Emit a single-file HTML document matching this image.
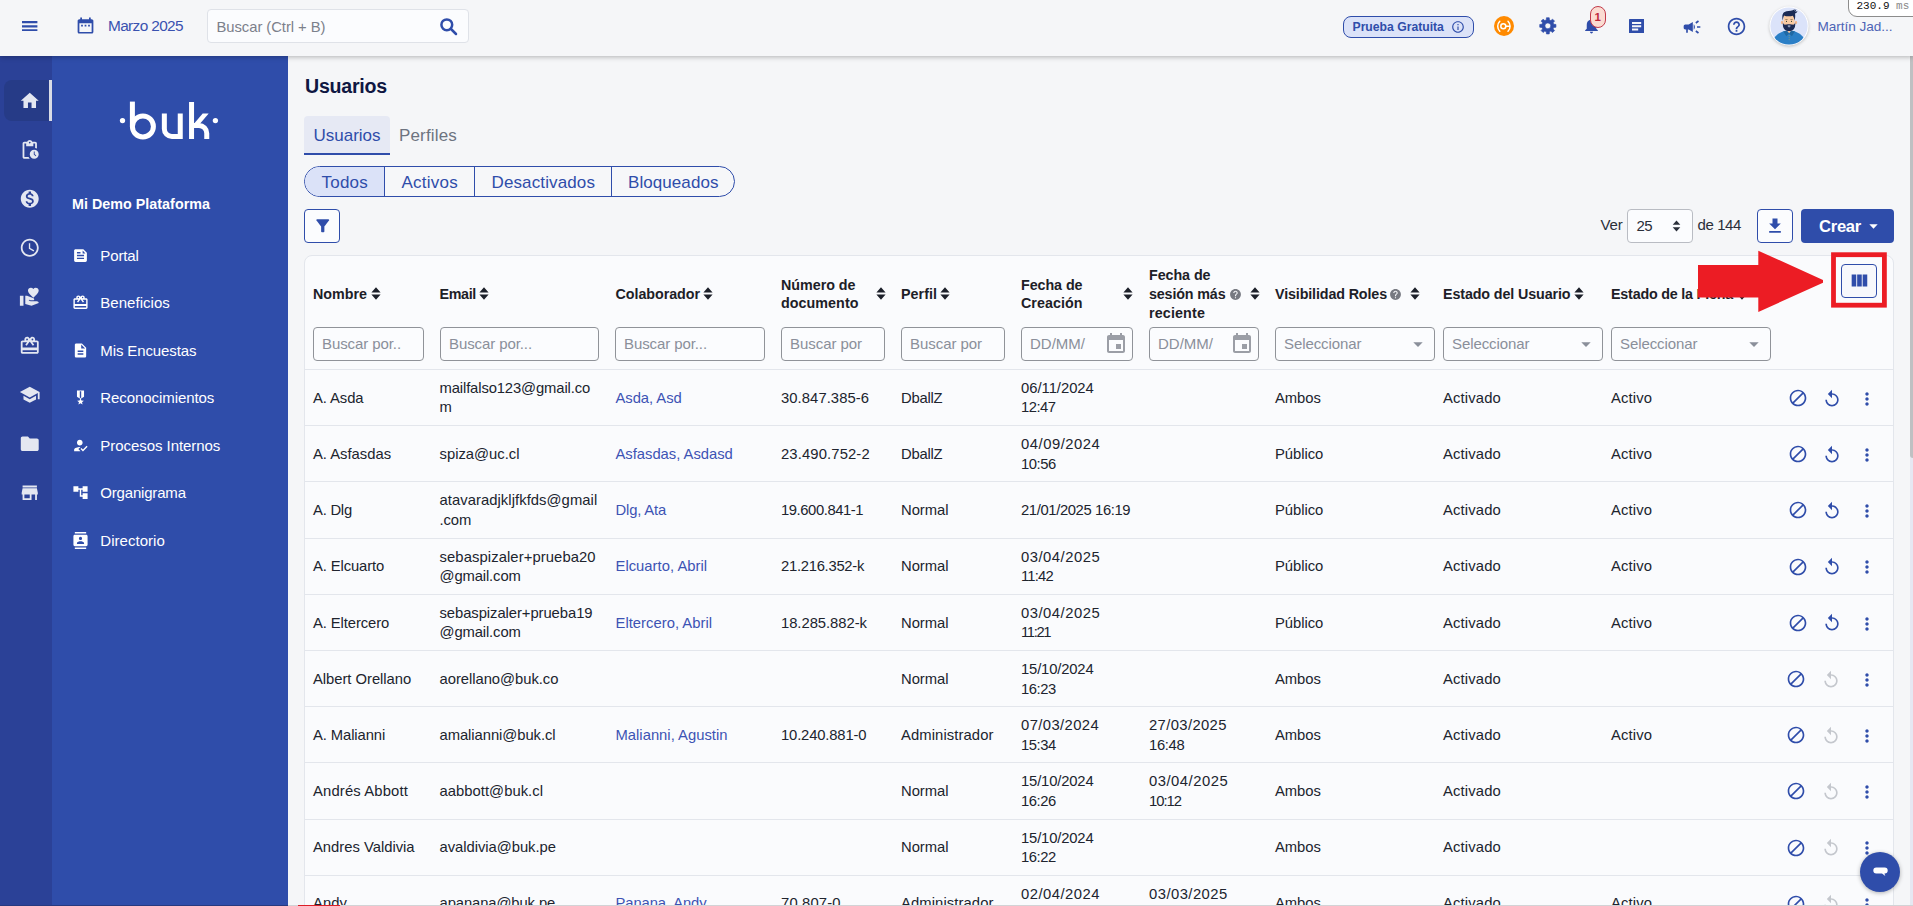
<!DOCTYPE html>
<html lang="es"><head><meta charset="utf-8"><title>Usuarios</title><style>
html,body{margin:0;padding:0}
body{width:1913px;height:906px;overflow:hidden;position:relative;background:#f5f6f8;font-family:"Liberation Sans",sans-serif}
.t{position:absolute;white-space:nowrap;line-height:20px;transform-origin:0 50%;font-family:"Liberation Sans",sans-serif}
.i{position:absolute;display:block}
.b{position:absolute}
</style></head><body>
<div class="b" style="left:0.00px;top:0.00px;width:1913.00px;height:906.00px;background:#f5f6f8"></div>
<div class="b" style="left:304.00px;top:255.00px;width:1590.00px;height:700.00px;background:#fafbfd;border:1px solid #e3e6ec;border-radius:8px;box-sizing:border-box"></div>
<span class="t" style="left:305.00px;top:76px;font-size:19.60px;font-weight:700;letter-spacing:-0.234px;color:#0f1742;">Usuarios</span>
<div class="b" style="left:304.00px;top:116.00px;width:86.00px;height:39.00px;background:#e6e9f4;border-radius:4px 4px 0 0;border-bottom:2.5px solid #2f4daa;box-sizing:border-box"></div>
<span class="t" style="left:313.50px;top:126px;font-size:17.00px;letter-spacing:-0.010px;color:#2f4daa;">Usuarios</span>
<span class="t" style="left:399.00px;top:126px;font-size:17.00px;letter-spacing:0.164px;color:#6d7380;">Perfiles</span>
<div class="b" style="left:304px;top:166px;width:431px;height:31px;border:1.3px solid #2f4daa;border-radius:16px;box-sizing:border-box;overflow:hidden;background:#f6f7f9"><div style="position:absolute;left:0;top:0;width:79.5px;height:100%;background:#dbe2f8"></div></div>
<div class="b" style="left:384.00px;top:166.00px;width:1.30px;height:31.00px;background:#2f4daa"></div>
<div class="b" style="left:474.00px;top:166.00px;width:1.30px;height:31.00px;background:#2f4daa"></div>
<div class="b" style="left:611.00px;top:166.00px;width:1.30px;height:31.00px;background:#2f4daa"></div>
<span class="t" style="left:321.50px;top:173px;font-size:17.00px;letter-spacing:0.227px;color:#2f4daa;">Todos</span>
<span class="t" style="left:401.50px;top:173px;font-size:17.00px;letter-spacing:0.244px;color:#2f4daa;">Activos</span>
<span class="t" style="left:491.50px;top:173px;font-size:17.00px;letter-spacing:0.121px;color:#2f4daa;">Desactivados</span>
<span class="t" style="left:628.00px;top:173px;font-size:17.00px;letter-spacing:0.070px;color:#2f4daa;">Bloqueados</span>
<div class="b" style="left:304.00px;top:209.00px;width:36.00px;height:34.00px;border:1.3px solid #2f4daa;border-radius:4px;box-sizing:border-box;background:#fbfcfe"></div>
<svg class="i" style="left:312.50px;top:216.20px" width="19.50" height="19.50" viewBox="0 0 24 24" fill="#2f4daa" ><path d="M4.25 5.61C6.27 8.2 10 13 10 13v6c0 .55.45 1 1 1h2c.55 0 1-.45 1-1v-6s3.72-4.8 5.74-7.39c.51-.66.04-1.61-.79-1.61H5.04c-.83 0-1.3.95-.79 1.61z"/></svg>
<span class="t" style="left:1600.50px;top:215px;font-size:15.00px;letter-spacing:-0.172px;color:#2a2f3a;">Ver</span>
<div class="b" style="left:1627.00px;top:209.00px;width:66.00px;height:34.00px;border:1px solid #b9bcc3;border-radius:4px;box-sizing:border-box;background:#fbfcfe"></div>
<span class="t" style="left:1636.50px;top:216px;font-size:15.00px;letter-spacing:-0.593px;color:#2a2f3a;">25</span>
<svg class="i" style="left:1671.5px;top:220px" width="9" height="12" viewBox="0 0 9 12" fill="#2a2f3a"><path d="M4.5 0.5 8.3 4.8H0.7zM4.5 11.5 0.7 7.2H8.3z"/></svg>
<span class="t" style="left:1697.50px;top:215px;font-size:15.00px;letter-spacing:-0.397px;color:#2a2f3a;">de 144</span>
<div class="b" style="left:1757.00px;top:209.00px;width:36.00px;height:34.00px;border:1.3px solid #2f4daa;border-radius:4px;box-sizing:border-box;background:#fbfcfe"></div>
<svg class="i" style="left:1765.00px;top:216.00px" width="20.00" height="20.00" viewBox="0 0 24 24" fill="#2f4daa" ><path d="M19 9h-4V3H9v6H5l7 7 7-7zM5 18v2h14v-2H5z"/></svg>
<div class="b" style="left:1801.00px;top:209.00px;width:93.00px;height:34.00px;border-radius:4px;background:#2f4daa"></div>
<span class="t" style="left:1819.00px;top:217px;font-size:16.60px;font-weight:700;letter-spacing:-0.275px;color:#fff;">Crear</span>
<svg class="i" style="left:1869px;top:223.5px" width="9" height="5" viewBox="0 0 9 5" fill="#fff"><path d="M0.3 0.3H8.7L4.5 4.7z"/></svg>
<span class="t" style="left:313.00px;top:284px;font-size:14.30px;font-weight:700;letter-spacing:-0.005px;color:#1d2027;">Nombre</span>
<svg class="i" style="left:370.50px;top:287.00px" width="10" height="13" viewBox="0 0 10 13" fill="#1c202a"><path d="M5 0.3 9.6 5.4H0.4zM5 12.7 0.4 7.6H9.6z"/></svg>
<span class="t" style="left:439.50px;top:284px;font-size:14.30px;font-weight:700;letter-spacing:-0.330px;color:#1d2027;">Email</span>
<svg class="i" style="left:479.00px;top:287.00px" width="10" height="13" viewBox="0 0 10 13" fill="#1c202a"><path d="M5 0.3 9.6 5.4H0.4zM5 12.7 0.4 7.6H9.6z"/></svg>
<span class="t" style="left:615.50px;top:284px;font-size:14.30px;font-weight:700;letter-spacing:-0.047px;color:#1d2027;">Colaborador</span>
<svg class="i" style="left:703.00px;top:287.00px" width="10" height="13" viewBox="0 0 10 13" fill="#1c202a"><path d="M5 0.3 9.6 5.4H0.4zM5 12.7 0.4 7.6H9.6z"/></svg>
<span class="t" style="left:781.00px;top:275px;font-size:14.30px;font-weight:700;letter-spacing:-0.021px;color:#1d2027;">Número de</span>
<span class="t" style="left:781.00px;top:293px;font-size:14.30px;font-weight:700;letter-spacing:0.049px;color:#1d2027;">documento</span>
<svg class="i" style="left:875.50px;top:287.00px" width="10" height="13" viewBox="0 0 10 13" fill="#1c202a"><path d="M5 0.3 9.6 5.4H0.4zM5 12.7 0.4 7.6H9.6z"/></svg>
<span class="t" style="left:901.00px;top:284px;font-size:14.30px;font-weight:700;letter-spacing:0.039px;color:#1d2027;">Perfil</span>
<svg class="i" style="left:940.00px;top:287.00px" width="10" height="13" viewBox="0 0 10 13" fill="#1c202a"><path d="M5 0.3 9.6 5.4H0.4zM5 12.7 0.4 7.6H9.6z"/></svg>
<span class="t" style="left:1021.00px;top:275px;font-size:14.30px;font-weight:700;letter-spacing:-0.061px;color:#1d2027;">Fecha de</span>
<span class="t" style="left:1021.00px;top:293px;font-size:14.30px;font-weight:700;letter-spacing:0.038px;color:#1d2027;">Creación</span>
<svg class="i" style="left:1123.00px;top:287.00px" width="10" height="13" viewBox="0 0 10 13" fill="#1c202a"><path d="M5 0.3 9.6 5.4H0.4zM5 12.7 0.4 7.6H9.6z"/></svg>
<span class="t" style="left:1149.00px;top:265px;font-size:14.30px;font-weight:700;letter-spacing:-0.061px;color:#1d2027;">Fecha de</span>
<span class="t" style="left:1149.00px;top:284px;font-size:14.30px;font-weight:700;letter-spacing:-0.140px;color:#1d2027;">sesión más</span>
<span class="t" style="left:1149.00px;top:303px;font-size:14.30px;font-weight:700;letter-spacing:0.144px;color:#1d2027;">reciente</span>
<svg class="i" style="left:1229.00px;top:287.80px" width="13.00" height="13.00" viewBox="0 0 24 24" fill="#777a82" ><path d="M12 2C6.48 2 2 6.48 2 12s4.48 10 10 10 10-4.48 10-10S17.52 2 12 2zm1 17h-2v-2h2v2zm2.07-7.75l-.9.92C13.45 12.9 13 13.5 13 15h-2v-.5c0-1.1.45-2.1 1.17-2.83l1.24-1.26c.37-.36.59-.86.59-1.41 0-1.1-.9-2-2-2s-2 .9-2 2H8c0-2.21 1.79-4 4-4s4 1.79 4 4c0 .88-.36 1.68-.93 2.25z"/></svg>
<svg class="i" style="left:1249.50px;top:287.00px" width="10" height="13" viewBox="0 0 10 13" fill="#1c202a"><path d="M5 0.3 9.6 5.4H0.4zM5 12.7 0.4 7.6H9.6z"/></svg>
<span class="t" style="left:1275.00px;top:284px;font-size:14.30px;font-weight:700;letter-spacing:-0.128px;color:#1d2027;">Visibilidad Roles</span>
<svg class="i" style="left:1389.00px;top:287.80px" width="13.00" height="13.00" viewBox="0 0 24 24" fill="#777a82" ><path d="M12 2C6.48 2 2 6.48 2 12s4.48 10 10 10 10-4.48 10-10S17.52 2 12 2zm1 17h-2v-2h2v2zm2.07-7.75l-.9.92C13.45 12.9 13 13.5 13 15h-2v-.5c0-1.1.45-2.1 1.17-2.83l1.24-1.26c.37-.36.59-.86.59-1.41 0-1.1-.9-2-2-2s-2 .9-2 2H8c0-2.21 1.79-4 4-4s4 1.79 4 4c0 .88-.36 1.68-.93 2.25z"/></svg>
<svg class="i" style="left:1409.50px;top:287.00px" width="10" height="13" viewBox="0 0 10 13" fill="#1c202a"><path d="M5 0.3 9.6 5.4H0.4zM5 12.7 0.4 7.6H9.6z"/></svg>
<span class="t" style="left:1443.00px;top:284px;font-size:14.30px;font-weight:700;letter-spacing:-0.113px;color:#1d2027;">Estado del Usuario</span>
<svg class="i" style="left:1573.50px;top:287.00px" width="10" height="13" viewBox="0 0 10 13" fill="#1c202a"><path d="M5 0.3 9.6 5.4H0.4zM5 12.7 0.4 7.6H9.6z"/></svg>
<span class="t" style="left:1611.00px;top:284px;font-size:14.30px;font-weight:700;letter-spacing:-0.198px;color:#1d2027;">Estado de la Ficha</span>
<svg class="i" style="left:1736.50px;top:287.00px" width="10" height="13" viewBox="0 0 10 13" fill="#1c202a"><path d="M5 0.3 9.6 5.4H0.4zM5 12.7 0.4 7.6H9.6z"/></svg>
<div class="b" style="left:313.00px;top:327.00px;width:111.00px;height:34.00px;border:1px solid #909399;border-radius:4px;box-sizing:border-box;background:#fbfcfe"></div>
<span class="t" style="left:322.00px;top:334px;font-size:15.00px;letter-spacing:-0.087px;color:#8a8f9a;">Buscar por..</span>
<div class="b" style="left:440.00px;top:327.00px;width:159.00px;height:34.00px;border:1px solid #909399;border-radius:4px;box-sizing:border-box;background:#fbfcfe"></div>
<span class="t" style="left:449.00px;top:334px;font-size:15.00px;letter-spacing:-0.093px;color:#8a8f9a;">Buscar por...</span>
<div class="b" style="left:615.00px;top:327.00px;width:150.00px;height:34.00px;border:1px solid #909399;border-radius:4px;box-sizing:border-box;background:#fbfcfe"></div>
<span class="t" style="left:624.00px;top:334px;font-size:15.00px;letter-spacing:-0.093px;color:#8a8f9a;">Buscar por...</span>
<div class="b" style="left:781.00px;top:327.00px;width:104.00px;height:34.00px;border:1px solid #909399;border-radius:4px;box-sizing:border-box;background:#fbfcfe"></div>
<span class="t" style="left:790.00px;top:334px;font-size:15.00px;letter-spacing:-0.053px;color:#8a8f9a;">Buscar por</span>
<div class="b" style="left:901.00px;top:327.00px;width:104.00px;height:34.00px;border:1px solid #909399;border-radius:4px;box-sizing:border-box;background:#fbfcfe"></div>
<span class="t" style="left:910.00px;top:334px;font-size:15.00px;letter-spacing:-0.053px;color:#8a8f9a;">Buscar por</span>
<div class="b" style="left:1021.00px;top:327.00px;width:112.00px;height:34.00px;border:1px solid #909399;border-radius:4px;box-sizing:border-box;background:#fbfcfe"></div>
<span class="t" style="left:1030.00px;top:334px;font-size:15.00px;letter-spacing:0.001px;color:#8a8f9a;">DD/MM/</span>
<svg class="i" style="left:1104.00px;top:332.20px" width="24.00" height="24.00" viewBox="0 0 24 24" fill="#9b9ea6" ><path d="M17 12h-5v5h5v-5zM16 1v2H8V1H6v2H5c-1.11 0-1.99.9-1.99 2L3 19c0 1.1.89 2 2 2h14c1.1 0 2-.9 2-2V5c0-1.100-.9-2-2-2h-1V1h-2zm3 18H5V8h14v11z"/></svg>
<div class="b" style="left:1149.00px;top:327.00px;width:110.00px;height:34.00px;border:1px solid #909399;border-radius:4px;box-sizing:border-box;background:#fbfcfe"></div>
<span class="t" style="left:1158.00px;top:334px;font-size:15.00px;letter-spacing:0.001px;color:#8a8f9a;">DD/MM/</span>
<svg class="i" style="left:1230.00px;top:332.20px" width="24.00" height="24.00" viewBox="0 0 24 24" fill="#9b9ea6" ><path d="M17 12h-5v5h5v-5zM16 1v2H8V1H6v2H5c-1.11 0-1.99.9-1.99 2L3 19c0 1.1.89 2 2 2h14c1.1 0 2-.9 2-2V5c0-1.100-.9-2-2-2h-1V1h-2zm3 18H5V8h14v11z"/></svg>
<div class="b" style="left:1275.00px;top:327.00px;width:160.00px;height:34.00px;border:1px solid #909399;border-radius:4px;box-sizing:border-box;background:#fbfcfe"></div>
<span class="t" style="left:1284.00px;top:334px;font-size:15.00px;letter-spacing:-0.080px;color:#8a8f9a;">Seleccionar</span>
<svg class="i" style="left:1412.50px;top:341.5px" width="10" height="5" viewBox="0 0 10 5" fill="#8a8f9a"><path d="M0.3 0.2H9.7L5 4.9z"/></svg>
<div class="b" style="left:1443.00px;top:327.00px;width:160.00px;height:34.00px;border:1px solid #909399;border-radius:4px;box-sizing:border-box;background:#fbfcfe"></div>
<span class="t" style="left:1452.00px;top:334px;font-size:15.00px;letter-spacing:-0.080px;color:#8a8f9a;">Seleccionar</span>
<svg class="i" style="left:1580.50px;top:341.5px" width="10" height="5" viewBox="0 0 10 5" fill="#8a8f9a"><path d="M0.3 0.2H9.7L5 4.9z"/></svg>
<div class="b" style="left:1611.00px;top:327.00px;width:160.00px;height:34.00px;border:1px solid #909399;border-radius:4px;box-sizing:border-box;background:#fbfcfe"></div>
<span class="t" style="left:1620.00px;top:334px;font-size:15.00px;letter-spacing:-0.080px;color:#8a8f9a;">Seleccionar</span>
<svg class="i" style="left:1748.50px;top:341.5px" width="10" height="5" viewBox="0 0 10 5" fill="#8a8f9a"><path d="M0.3 0.2H9.7L5 4.9z"/></svg>
<div class="b" style="left:305.00px;top:369.00px;width:1588.00px;height:1.00px;background:#e3e6ec"></div>
<span class="t" style="left:313.00px;top:388px;font-size:14.80px;letter-spacing:-0.073px;color:#20242e;">A. Asda</span>
<span class="t" style="left:439.50px;top:378px;font-size:14.80px;letter-spacing:-0.125px;color:#20242e;">mailfalso123@gmail.co</span>
<span class="t" style="left:439.50px;top:397px;font-size:14.80px;letter-spacing:-0.429px;color:#20242e;">m</span>
<span class="t" style="left:615.50px;top:388px;font-size:14.80px;letter-spacing:-0.049px;color:#3d53b4;">Asda, Asd</span>
<span class="t" style="left:781.00px;top:388px;font-size:14.80px;letter-spacing:0.072px;color:#20242e;">30.847.385-6</span>
<span class="t" style="left:901.00px;top:388px;font-size:14.80px;letter-spacing:-0.228px;color:#20242e;">DballZ</span>
<span class="t" style="left:1021.00px;top:378px;font-size:14.80px;letter-spacing:-0.018px;color:#20242e;">06/11/2024</span>
<span class="t" style="left:1021.00px;top:397px;font-size:14.80px;letter-spacing:-0.507px;color:#20242e;">12:47</span>
<span class="t" style="left:1275.00px;top:388px;font-size:14.80px;letter-spacing:-0.053px;color:#20242e;">Ambos</span>
<span class="t" style="left:1443.00px;top:388px;font-size:14.80px;letter-spacing:0.154px;color:#20242e;">Activado</span>
<span class="t" style="left:1611.00px;top:388px;font-size:14.80px;letter-spacing:0.116px;color:#20242e;">Activo</span>
<svg class="i" style="left:1788.30px;top:387.90px" width="20.00" height="20.00" viewBox="0 0 24 24" fill="#2f4daa" ><path d="M12 2C6.48 2 2 6.48 2 12s4.48 10 10 10 10-4.48 10-10S17.52 2 12 2zM4 12c0-4.42 3.58-8 8-8 1.85 0 3.55.63 4.9 1.69L5.69 16.9C4.63 15.55 4 13.85 4 12zm8 8c-1.85 0-3.55-.63-4.9-1.69L18.31 7.1C19.37 8.45 20 10.150 20 12c0 4.420-3.580 8-8 8z"/></svg>
<svg class="i" style="left:1822.00px;top:388.60px" width="20.00" height="20.00" viewBox="0 0 24 24" fill="#2f4daa" ><path d="M12 5V1L7 6l5 5V7c3.31 0 6 2.69 6 6s-2.69 6-6 6-6-2.69-6-6H4c0 4.42 3.58 8 8 8s8-3.58 8-8-3.58-8-8-8z"/></svg>
<svg class="i" style="left:1856.80px;top:388.70px" width="20.00" height="20.00" viewBox="0 0 24 24" fill="#2f4daa" ><path d="M12 8c1.1 0 2-.9 2-2s-.9-2-2-2-2 .9-2 2 .9 2 2 2zm0 2c-1.1 0-2 .9-2 2s.9 2 2 2 2-.9 2-2-.9-2-2-2zm0 6c-1.1 0-2 .9-2 2s.9 2 2 2 2-.9 2-2-.9-2-2-2z"/></svg>
<div class="b" style="left:305.00px;top:425.20px;width:1588.00px;height:1.00px;background:#e3e6ec"></div>
<span class="t" style="left:313.00px;top:444px;font-size:14.80px;letter-spacing:-0.005px;color:#20242e;">A. Asfasdas</span>
<span class="t" style="left:439.50px;top:444px;font-size:14.80px;letter-spacing:-0.001px;color:#20242e;">spiza@uc.cl</span>
<span class="t" style="left:615.50px;top:444px;font-size:14.80px;letter-spacing:-0.022px;color:#3d53b4;">Asfasdas, Asdasd</span>
<span class="t" style="left:781.00px;top:444px;font-size:14.80px;letter-spacing:0.130px;color:#20242e;">23.490.752-2</span>
<span class="t" style="left:901.00px;top:444px;font-size:14.80px;letter-spacing:-0.228px;color:#20242e;">DballZ</span>
<span class="t" style="left:1021.00px;top:434px;font-size:14.80px;letter-spacing:0.533px;color:#20242e;">04/09/2024</span>
<span class="t" style="left:1021.00px;top:454px;font-size:14.80px;letter-spacing:-0.447px;color:#20242e;">10:56</span>
<span class="t" style="left:1275.00px;top:444px;font-size:14.80px;letter-spacing:-0.035px;color:#20242e;">Público</span>
<span class="t" style="left:1443.00px;top:444px;font-size:14.80px;letter-spacing:0.154px;color:#20242e;">Activado</span>
<span class="t" style="left:1611.00px;top:444px;font-size:14.80px;letter-spacing:0.116px;color:#20242e;">Activo</span>
<svg class="i" style="left:1788.30px;top:444.10px" width="20.00" height="20.00" viewBox="0 0 24 24" fill="#2f4daa" ><path d="M12 2C6.48 2 2 6.48 2 12s4.48 10 10 10 10-4.48 10-10S17.52 2 12 2zM4 12c0-4.42 3.58-8 8-8 1.85 0 3.55.63 4.9 1.69L5.69 16.9C4.63 15.55 4 13.85 4 12zm8 8c-1.85 0-3.55-.63-4.9-1.69L18.31 7.1C19.37 8.45 20 10.150 20 12c0 4.420-3.580 8-8 8z"/></svg>
<svg class="i" style="left:1822.00px;top:444.80px" width="20.00" height="20.00" viewBox="0 0 24 24" fill="#2f4daa" ><path d="M12 5V1L7 6l5 5V7c3.31 0 6 2.69 6 6s-2.69 6-6 6-6-2.69-6-6H4c0 4.42 3.58 8 8 8s8-3.58 8-8-3.58-8-8-8z"/></svg>
<svg class="i" style="left:1856.80px;top:444.90px" width="20.00" height="20.00" viewBox="0 0 24 24" fill="#2f4daa" ><path d="M12 8c1.1 0 2-.9 2-2s-.9-2-2-2-2 .9-2 2 .9 2 2 2zm0 2c-1.1 0-2 .9-2 2s.9 2 2 2 2-.9 2-2-.9-2-2-2zm0 6c-1.1 0-2 .9-2 2s.9 2 2 2 2-.9 2-2-.9-2-2-2z"/></svg>
<div class="b" style="left:305.00px;top:481.40px;width:1588.00px;height:1.00px;background:#e3e6ec"></div>
<span class="t" style="left:313.00px;top:500px;font-size:14.80px;letter-spacing:-0.234px;color:#20242e;">A. Dlg</span>
<span class="t" style="left:439.50px;top:490px;font-size:14.80px;letter-spacing:0.056px;color:#20242e;">atavaradjkljfkfds@gmail</span>
<span class="t" style="left:439.50px;top:510px;font-size:14.80px;letter-spacing:-0.093px;color:#20242e;">.com</span>
<span class="t" style="left:615.50px;top:500px;font-size:14.80px;letter-spacing:-0.166px;color:#3d53b4;">Dlg, Ata</span>
<span class="t" style="left:781.00px;top:500px;font-size:14.80px;letter-spacing:-0.420px;color:#20242e;">19.600.841-1</span>
<span class="t" style="left:901.00px;top:500px;font-size:14.80px;letter-spacing:-0.050px;color:#20242e;">Normal</span>
<span class="t" style="left:1021.00px;top:500px;font-size:14.80px;letter-spacing:-0.376px;color:#20242e;">21/01/2025 16:19</span>
<span class="t" style="left:1275.00px;top:500px;font-size:14.80px;letter-spacing:-0.035px;color:#20242e;">Público</span>
<span class="t" style="left:1443.00px;top:500px;font-size:14.80px;letter-spacing:0.154px;color:#20242e;">Activado</span>
<span class="t" style="left:1611.00px;top:500px;font-size:14.80px;letter-spacing:0.116px;color:#20242e;">Activo</span>
<svg class="i" style="left:1788.30px;top:500.30px" width="20.00" height="20.00" viewBox="0 0 24 24" fill="#2f4daa" ><path d="M12 2C6.48 2 2 6.48 2 12s4.48 10 10 10 10-4.48 10-10S17.52 2 12 2zM4 12c0-4.42 3.58-8 8-8 1.85 0 3.55.63 4.9 1.69L5.69 16.9C4.63 15.55 4 13.85 4 12zm8 8c-1.85 0-3.55-.63-4.9-1.69L18.31 7.1C19.37 8.45 20 10.150 20 12c0 4.420-3.580 8-8 8z"/></svg>
<svg class="i" style="left:1822.00px;top:501.00px" width="20.00" height="20.00" viewBox="0 0 24 24" fill="#2f4daa" ><path d="M12 5V1L7 6l5 5V7c3.31 0 6 2.69 6 6s-2.69 6-6 6-6-2.69-6-6H4c0 4.42 3.58 8 8 8s8-3.58 8-8-3.58-8-8-8z"/></svg>
<svg class="i" style="left:1856.80px;top:501.10px" width="20.00" height="20.00" viewBox="0 0 24 24" fill="#2f4daa" ><path d="M12 8c1.1 0 2-.9 2-2s-.9-2-2-2-2 .9-2 2 .9 2 2 2zm0 2c-1.1 0-2 .9-2 2s.9 2 2 2 2-.9 2-2-.9-2-2-2zm0 6c-1.1 0-2 .9-2 2s.9 2 2 2 2-.9 2-2-.9-2-2-2z"/></svg>
<div class="b" style="left:305.00px;top:537.60px;width:1588.00px;height:1.00px;background:#e3e6ec"></div>
<span class="t" style="left:313.00px;top:556px;font-size:14.80px;letter-spacing:-0.108px;color:#20242e;">A. Elcuarto</span>
<span class="t" style="left:439.50px;top:547px;font-size:14.80px;letter-spacing:0.091px;color:#20242e;">sebaspizaler+prueba20</span>
<span class="t" style="left:439.50px;top:566px;font-size:14.80px;letter-spacing:-0.126px;color:#20242e;">@gmail.com</span>
<span class="t" style="left:615.50px;top:556px;font-size:14.80px;letter-spacing:0.019px;color:#3d53b4;">Elcuarto, Abril</span>
<span class="t" style="left:781.00px;top:556px;font-size:14.80px;letter-spacing:-0.275px;color:#20242e;">21.216.352-k</span>
<span class="t" style="left:901.00px;top:556px;font-size:14.80px;letter-spacing:-0.050px;color:#20242e;">Normal</span>
<span class="t" style="left:1021.00px;top:547px;font-size:14.80px;letter-spacing:0.513px;color:#20242e;">03/04/2025</span>
<span class="t" style="left:1021.00px;top:566px;font-size:14.80px;letter-spacing:-0.788px;color:#20242e;">11:42</span>
<span class="t" style="left:1275.00px;top:556px;font-size:14.80px;letter-spacing:-0.035px;color:#20242e;">Público</span>
<span class="t" style="left:1443.00px;top:556px;font-size:14.80px;letter-spacing:0.154px;color:#20242e;">Activado</span>
<span class="t" style="left:1611.00px;top:556px;font-size:14.80px;letter-spacing:0.116px;color:#20242e;">Activo</span>
<svg class="i" style="left:1788.30px;top:556.50px" width="20.00" height="20.00" viewBox="0 0 24 24" fill="#2f4daa" ><path d="M12 2C6.48 2 2 6.48 2 12s4.48 10 10 10 10-4.48 10-10S17.52 2 12 2zM4 12c0-4.42 3.58-8 8-8 1.85 0 3.55.63 4.9 1.69L5.69 16.9C4.63 15.55 4 13.85 4 12zm8 8c-1.85 0-3.55-.63-4.9-1.69L18.31 7.1C19.37 8.45 20 10.150 20 12c0 4.420-3.580 8-8 8z"/></svg>
<svg class="i" style="left:1822.00px;top:557.20px" width="20.00" height="20.00" viewBox="0 0 24 24" fill="#2f4daa" ><path d="M12 5V1L7 6l5 5V7c3.31 0 6 2.69 6 6s-2.69 6-6 6-6-2.69-6-6H4c0 4.42 3.58 8 8 8s8-3.58 8-8-3.58-8-8-8z"/></svg>
<svg class="i" style="left:1856.80px;top:557.30px" width="20.00" height="20.00" viewBox="0 0 24 24" fill="#2f4daa" ><path d="M12 8c1.1 0 2-.9 2-2s-.9-2-2-2-2 .9-2 2 .9 2 2 2zm0 2c-1.1 0-2 .9-2 2s.9 2 2 2 2-.9 2-2-.9-2-2-2zm0 6c-1.1 0-2 .9-2 2s.9 2 2 2 2-.9 2-2-.9-2-2-2z"/></svg>
<div class="b" style="left:305.00px;top:593.80px;width:1588.00px;height:1.00px;background:#e3e6ec"></div>
<span class="t" style="left:313.00px;top:613px;font-size:14.80px;letter-spacing:-0.093px;color:#20242e;">A. Eltercero</span>
<span class="t" style="left:439.50px;top:603px;font-size:14.80px;letter-spacing:-0.061px;color:#20242e;">sebaspizaler+prueba19</span>
<span class="t" style="left:439.50px;top:622px;font-size:14.80px;letter-spacing:-0.126px;color:#20242e;">@gmail.com</span>
<span class="t" style="left:615.50px;top:613px;font-size:14.80px;letter-spacing:0.022px;color:#3d53b4;">Eltercero, Abril</span>
<span class="t" style="left:781.00px;top:613px;font-size:14.80px;letter-spacing:-0.042px;color:#20242e;">18.285.882-k</span>
<span class="t" style="left:901.00px;top:613px;font-size:14.80px;letter-spacing:-0.050px;color:#20242e;">Normal</span>
<span class="t" style="left:1021.00px;top:603px;font-size:14.80px;letter-spacing:0.513px;color:#20242e;">03/04/2025</span>
<span class="t" style="left:1021.00px;top:622px;font-size:14.80px;letter-spacing:-1.348px;color:#20242e;">11:21</span>
<span class="t" style="left:1275.00px;top:613px;font-size:14.80px;letter-spacing:-0.035px;color:#20242e;">Público</span>
<span class="t" style="left:1443.00px;top:613px;font-size:14.80px;letter-spacing:0.154px;color:#20242e;">Activado</span>
<span class="t" style="left:1611.00px;top:613px;font-size:14.80px;letter-spacing:0.116px;color:#20242e;">Activo</span>
<svg class="i" style="left:1788.30px;top:612.70px" width="20.00" height="20.00" viewBox="0 0 24 24" fill="#2f4daa" ><path d="M12 2C6.48 2 2 6.48 2 12s4.48 10 10 10 10-4.48 10-10S17.52 2 12 2zM4 12c0-4.42 3.58-8 8-8 1.85 0 3.55.63 4.9 1.69L5.69 16.9C4.63 15.55 4 13.85 4 12zm8 8c-1.85 0-3.55-.63-4.9-1.69L18.31 7.1C19.37 8.45 20 10.150 20 12c0 4.420-3.580 8-8 8z"/></svg>
<svg class="i" style="left:1822.00px;top:613.40px" width="20.00" height="20.00" viewBox="0 0 24 24" fill="#2f4daa" ><path d="M12 5V1L7 6l5 5V7c3.31 0 6 2.69 6 6s-2.69 6-6 6-6-2.69-6-6H4c0 4.42 3.58 8 8 8s8-3.58 8-8-3.58-8-8-8z"/></svg>
<svg class="i" style="left:1856.80px;top:613.50px" width="20.00" height="20.00" viewBox="0 0 24 24" fill="#2f4daa" ><path d="M12 8c1.1 0 2-.9 2-2s-.9-2-2-2-2 .9-2 2 .9 2 2 2zm0 2c-1.1 0-2 .9-2 2s.9 2 2 2 2-.9 2-2-.9-2-2-2zm0 6c-1.1 0-2 .9-2 2s.9 2 2 2 2-.9 2-2-.9-2-2-2z"/></svg>
<div class="b" style="left:305.00px;top:650.00px;width:1588.00px;height:1.00px;background:#e3e6ec"></div>
<span class="t" style="left:313.00px;top:669px;font-size:14.80px;letter-spacing:-0.035px;color:#20242e;">Albert Orellano</span>
<span class="t" style="left:439.50px;top:669px;font-size:14.80px;letter-spacing:-0.039px;color:#20242e;">aorellano@buk.co</span>
<span class="t" style="left:901.00px;top:669px;font-size:14.80px;letter-spacing:-0.050px;color:#20242e;">Normal</span>
<span class="t" style="left:1021.00px;top:659px;font-size:14.80px;letter-spacing:-0.157px;color:#20242e;">15/10/2024</span>
<span class="t" style="left:1021.00px;top:679px;font-size:14.80px;letter-spacing:-0.447px;color:#20242e;">16:23</span>
<span class="t" style="left:1275.00px;top:669px;font-size:14.80px;letter-spacing:-0.053px;color:#20242e;">Ambos</span>
<span class="t" style="left:1443.00px;top:669px;font-size:14.80px;letter-spacing:0.154px;color:#20242e;">Activado</span>
<svg class="i" style="left:1786.30px;top:668.90px" width="20.00" height="20.00" viewBox="0 0 24 24" fill="#2f4daa" ><path d="M12 2C6.48 2 2 6.48 2 12s4.48 10 10 10 10-4.48 10-10S17.52 2 12 2zM4 12c0-4.42 3.58-8 8-8 1.85 0 3.55.63 4.9 1.69L5.69 16.9C4.63 15.55 4 13.85 4 12zm8 8c-1.85 0-3.55-.63-4.9-1.69L18.31 7.1C19.37 8.45 20 10.150 20 12c0 4.420-3.580 8-8 8z"/></svg>
<svg class="i" style="left:1821.00px;top:669.60px" width="20.00" height="20.00" viewBox="0 0 24 24" fill="#c4c7cd" ><path d="M12 5V1L7 6l5 5V7c3.31 0 6 2.69 6 6s-2.69 6-6 6-6-2.69-6-6H4c0 4.42 3.58 8 8 8s8-3.58 8-8-3.58-8-8-8z"/></svg>
<svg class="i" style="left:1856.80px;top:669.70px" width="20.00" height="20.00" viewBox="0 0 24 24" fill="#2f4daa" ><path d="M12 8c1.1 0 2-.9 2-2s-.9-2-2-2-2 .9-2 2 .9 2 2 2zm0 2c-1.1 0-2 .9-2 2s.9 2 2 2 2-.9 2-2-.9-2-2-2zm0 6c-1.1 0-2 .9-2 2s.9 2 2 2 2-.9 2-2-.9-2-2-2z"/></svg>
<div class="b" style="left:305.00px;top:706.20px;width:1588.00px;height:1.00px;background:#e3e6ec"></div>
<span class="t" style="left:313.00px;top:725px;font-size:14.80px;letter-spacing:-0.101px;color:#20242e;">A. Malianni</span>
<span class="t" style="left:439.50px;top:725px;font-size:14.80px;letter-spacing:-0.059px;color:#20242e;">amalianni@buk.cl</span>
<span class="t" style="left:615.50px;top:725px;font-size:14.80px;letter-spacing:0.006px;color:#3d53b4;">Malianni, Agustin</span>
<span class="t" style="left:781.00px;top:725px;font-size:14.80px;letter-spacing:-0.161px;color:#20242e;">10.240.881-0</span>
<span class="t" style="left:901.00px;top:725px;font-size:14.80px;letter-spacing:0.092px;color:#20242e;">Administrador</span>
<span class="t" style="left:1021.00px;top:715px;font-size:14.80px;letter-spacing:0.403px;color:#20242e;">07/03/2024</span>
<span class="t" style="left:1021.00px;top:735px;font-size:14.80px;letter-spacing:-0.447px;color:#20242e;">15:34</span>
<span class="t" style="left:1149.00px;top:715px;font-size:14.80px;letter-spacing:0.373px;color:#20242e;">27/03/2025</span>
<span class="t" style="left:1149.00px;top:735px;font-size:14.80px;letter-spacing:-0.327px;color:#20242e;">16:48</span>
<span class="t" style="left:1275.00px;top:725px;font-size:14.80px;letter-spacing:-0.053px;color:#20242e;">Ambos</span>
<span class="t" style="left:1443.00px;top:725px;font-size:14.80px;letter-spacing:0.154px;color:#20242e;">Activado</span>
<span class="t" style="left:1611.00px;top:725px;font-size:14.80px;letter-spacing:0.116px;color:#20242e;">Activo</span>
<svg class="i" style="left:1786.30px;top:725.10px" width="20.00" height="20.00" viewBox="0 0 24 24" fill="#2f4daa" ><path d="M12 2C6.48 2 2 6.48 2 12s4.48 10 10 10 10-4.48 10-10S17.52 2 12 2zM4 12c0-4.42 3.58-8 8-8 1.85 0 3.55.63 4.9 1.69L5.69 16.9C4.63 15.55 4 13.85 4 12zm8 8c-1.85 0-3.55-.63-4.9-1.69L18.31 7.1C19.37 8.45 20 10.150 20 12c0 4.420-3.580 8-8 8z"/></svg>
<svg class="i" style="left:1821.00px;top:725.80px" width="20.00" height="20.00" viewBox="0 0 24 24" fill="#c4c7cd" ><path d="M12 5V1L7 6l5 5V7c3.31 0 6 2.69 6 6s-2.69 6-6 6-6-2.69-6-6H4c0 4.42 3.58 8 8 8s8-3.58 8-8-3.58-8-8-8z"/></svg>
<svg class="i" style="left:1856.80px;top:725.90px" width="20.00" height="20.00" viewBox="0 0 24 24" fill="#2f4daa" ><path d="M12 8c1.1 0 2-.9 2-2s-.9-2-2-2-2 .9-2 2 .9 2 2 2zm0 2c-1.1 0-2 .9-2 2s.9 2 2 2 2-.9 2-2-.9-2-2-2zm0 6c-1.1 0-2 .9-2 2s.9 2 2 2 2-.9 2-2-.9-2-2-2z"/></svg>
<div class="b" style="left:305.00px;top:762.40px;width:1588.00px;height:1.00px;background:#e3e6ec"></div>
<span class="t" style="left:313.00px;top:781px;font-size:14.80px;letter-spacing:0.155px;color:#20242e;">Andrés Abbott</span>
<span class="t" style="left:439.50px;top:781px;font-size:14.80px;letter-spacing:0.031px;color:#20242e;">aabbott@buk.cl</span>
<span class="t" style="left:901.00px;top:781px;font-size:14.80px;letter-spacing:-0.050px;color:#20242e;">Normal</span>
<span class="t" style="left:1021.00px;top:771px;font-size:14.80px;letter-spacing:-0.157px;color:#20242e;">15/10/2024</span>
<span class="t" style="left:1021.00px;top:791px;font-size:14.80px;letter-spacing:-0.447px;color:#20242e;">16:26</span>
<span class="t" style="left:1149.00px;top:771px;font-size:14.80px;letter-spacing:0.513px;color:#20242e;">03/04/2025</span>
<span class="t" style="left:1149.00px;top:791px;font-size:14.80px;letter-spacing:-1.007px;color:#20242e;">10:12</span>
<span class="t" style="left:1275.00px;top:781px;font-size:14.80px;letter-spacing:-0.053px;color:#20242e;">Ambos</span>
<span class="t" style="left:1443.00px;top:781px;font-size:14.80px;letter-spacing:0.154px;color:#20242e;">Activado</span>
<svg class="i" style="left:1786.30px;top:781.30px" width="20.00" height="20.00" viewBox="0 0 24 24" fill="#2f4daa" ><path d="M12 2C6.48 2 2 6.48 2 12s4.48 10 10 10 10-4.48 10-10S17.52 2 12 2zM4 12c0-4.42 3.58-8 8-8 1.85 0 3.55.63 4.9 1.69L5.69 16.9C4.63 15.55 4 13.85 4 12zm8 8c-1.85 0-3.55-.63-4.9-1.69L18.31 7.1C19.37 8.45 20 10.150 20 12c0 4.420-3.580 8-8 8z"/></svg>
<svg class="i" style="left:1821.00px;top:782.00px" width="20.00" height="20.00" viewBox="0 0 24 24" fill="#c4c7cd" ><path d="M12 5V1L7 6l5 5V7c3.31 0 6 2.69 6 6s-2.69 6-6 6-6-2.69-6-6H4c0 4.42 3.58 8 8 8s8-3.58 8-8-3.58-8-8-8z"/></svg>
<svg class="i" style="left:1856.80px;top:782.10px" width="20.00" height="20.00" viewBox="0 0 24 24" fill="#2f4daa" ><path d="M12 8c1.1 0 2-.9 2-2s-.9-2-2-2-2 .9-2 2 .9 2 2 2zm0 2c-1.1 0-2 .9-2 2s.9 2 2 2 2-.9 2-2-.9-2-2-2zm0 6c-1.1 0-2 .9-2 2s.9 2 2 2 2-.9 2-2-.9-2-2-2z"/></svg>
<div class="b" style="left:305.00px;top:818.60px;width:1588.00px;height:1.00px;background:#e3e6ec"></div>
<span class="t" style="left:313.00px;top:837px;font-size:14.80px;letter-spacing:-0.009px;color:#20242e;">Andres Valdivia</span>
<span class="t" style="left:439.50px;top:837px;font-size:14.80px;letter-spacing:-0.041px;color:#20242e;">avaldivia@buk.pe</span>
<span class="t" style="left:901.00px;top:837px;font-size:14.80px;letter-spacing:-0.050px;color:#20242e;">Normal</span>
<span class="t" style="left:1021.00px;top:828px;font-size:14.80px;letter-spacing:-0.157px;color:#20242e;">15/10/2024</span>
<span class="t" style="left:1021.00px;top:847px;font-size:14.80px;letter-spacing:-0.447px;color:#20242e;">16:22</span>
<span class="t" style="left:1275.00px;top:837px;font-size:14.80px;letter-spacing:-0.053px;color:#20242e;">Ambos</span>
<span class="t" style="left:1443.00px;top:837px;font-size:14.80px;letter-spacing:0.154px;color:#20242e;">Activado</span>
<svg class="i" style="left:1786.30px;top:837.50px" width="20.00" height="20.00" viewBox="0 0 24 24" fill="#2f4daa" ><path d="M12 2C6.48 2 2 6.48 2 12s4.48 10 10 10 10-4.48 10-10S17.52 2 12 2zM4 12c0-4.42 3.58-8 8-8 1.85 0 3.55.63 4.9 1.69L5.69 16.9C4.63 15.55 4 13.85 4 12zm8 8c-1.85 0-3.55-.63-4.9-1.69L18.31 7.1C19.37 8.45 20 10.150 20 12c0 4.420-3.580 8-8 8z"/></svg>
<svg class="i" style="left:1821.00px;top:838.20px" width="20.00" height="20.00" viewBox="0 0 24 24" fill="#c4c7cd" ><path d="M12 5V1L7 6l5 5V7c3.31 0 6 2.69 6 6s-2.69 6-6 6-6-2.69-6-6H4c0 4.42 3.58 8 8 8s8-3.58 8-8-3.58-8-8-8z"/></svg>
<svg class="i" style="left:1856.80px;top:838.30px" width="20.00" height="20.00" viewBox="0 0 24 24" fill="#2f4daa" ><path d="M12 8c1.1 0 2-.9 2-2s-.9-2-2-2-2 .9-2 2 .9 2 2 2zm0 2c-1.1 0-2 .9-2 2s.9 2 2 2 2-.9 2-2-.9-2-2-2zm0 6c-1.1 0-2 .9-2 2s.9 2 2 2 2-.9 2-2-.9-2-2-2z"/></svg>
<div class="b" style="left:305.00px;top:874.80px;width:1588.00px;height:1.00px;background:#e3e6ec"></div>
<span class="t" style="left:313.00px;top:893px;font-size:14.80px;letter-spacing:0.041px;color:#20242e;">Andy</span>
<span class="t" style="left:439.50px;top:893px;font-size:14.80px;letter-spacing:-0.099px;color:#20242e;">apanana@buk.pe</span>
<span class="t" style="left:615.50px;top:893px;font-size:14.80px;letter-spacing:-0.098px;color:#3d53b4;">Panana, Andy</span>
<span class="t" style="left:781.00px;top:893px;font-size:14.80px;letter-spacing:0.146px;color:#20242e;">70.807-0</span>
<span class="t" style="left:901.00px;top:893px;font-size:14.80px;letter-spacing:0.092px;color:#20242e;">Administrador</span>
<span class="t" style="left:1021.00px;top:884px;font-size:14.80px;letter-spacing:0.493px;color:#20242e;">02/04/2024</span>
<span class="t" style="left:1149.00px;top:884px;font-size:14.80px;letter-spacing:0.463px;color:#20242e;">03/03/2025</span>
<span class="t" style="left:1275.00px;top:893px;font-size:14.80px;letter-spacing:-0.053px;color:#20242e;">Ambos</span>
<span class="t" style="left:1443.00px;top:893px;font-size:14.80px;letter-spacing:0.154px;color:#20242e;">Activado</span>
<span class="t" style="left:1611.00px;top:893px;font-size:14.80px;letter-spacing:0.116px;color:#20242e;">Activo</span>
<svg class="i" style="left:1786.30px;top:893.70px" width="20.00" height="20.00" viewBox="0 0 24 24" fill="#2f4daa" ><path d="M12 2C6.48 2 2 6.48 2 12s4.48 10 10 10 10-4.48 10-10S17.52 2 12 2zM4 12c0-4.42 3.58-8 8-8 1.85 0 3.55.63 4.9 1.69L5.69 16.9C4.63 15.55 4 13.85 4 12zm8 8c-1.85 0-3.55-.63-4.9-1.69L18.31 7.1C19.37 8.45 20 10.150 20 12c0 4.420-3.580 8-8 8z"/></svg>
<svg class="i" style="left:1821.00px;top:894.40px" width="20.00" height="20.00" viewBox="0 0 24 24" fill="#c4c7cd" ><path d="M12 5V1L7 6l5 5V7c3.31 0 6 2.69 6 6s-2.69 6-6 6-6-2.69-6-6H4c0 4.42 3.58 8 8 8s8-3.58 8-8-3.58-8-8-8z"/></svg>
<svg class="i" style="left:1856.80px;top:894.50px" width="20.00" height="20.00" viewBox="0 0 24 24" fill="#2f4daa" ><path d="M12 8c1.1 0 2-.9 2-2s-.9-2-2-2-2 .9-2 2 .9 2 2 2zm0 2c-1.1 0-2 .9-2 2s.9 2 2 2 2-.9 2-2-.9-2-2-2zm0 6c-1.1 0-2 .9-2 2s.9 2 2 2 2-.9 2-2-.9-2-2-2z"/></svg>
<svg class="i" style="left:0;top:0" width="1913" height="906" viewBox="0 0 1913 906"><polygon points="1698,265 1758.3,265 1758.3,250.7 1823,280 1823,282.700 1758.3,312 1758.3,297.600 1698,297.600" fill="#ec1c24"/><rect x="1833.5" y="254.700" width="50.900" height="50.500" fill="none" stroke="#ec1c24" stroke-width="4.800"/></svg>
<div class="b" style="left:1841.00px;top:264.00px;width:36.00px;height:34.00px;border:1.3px solid #2f4daa;border-radius:4px;box-sizing:border-box;background:#f7f8fc"></div>
<svg class="i" style="left:1848.00px;top:270.00px" width="22.00" height="22.00" viewBox="0 0 24 24" fill="#2f4daa" ><path d="M10 18h5V5h-5v13zm-6 0h5V5H4v13zM16 5v13h5V5h-5z"/></svg>
<div class="b" style="left:1910.00px;top:56.00px;width:3.00px;height:850.00px;background:#e6e8f2"></div>
<div class="b" style="left:1910.20px;top:56.00px;width:4.00px;height:402.00px;background:#bfc0c2;border-radius:0 0 0 3px"></div>
<div class="b" style="left:1860.00px;top:851.50px;width:40.00px;height:40.00px;border-radius:50%;background:#2f4daa;box-shadow:0 1px 4px rgba(0,0,0,.3)"></div>
<svg class="i" style="left:1872.5px;top:867px" width="15" height="10" viewBox="0 0 15 10"><path d="M3.300 0.500h8.400a3 3 0 0 1 0 6h-0.300l0.900 2.500-3.300-2.500H3.300a3 3 0 0 1 0-6z" fill="#fff"/></svg>
<div class="b" style="left:288.00px;top:905.00px;width:1625.00px;height:1.00px;background:#d2d3d6"></div>
<div class="b" style="left:298.00px;top:905.00px;width:42.00px;height:1.00px;background:#dc1f28"></div>
<div class="b" style="left:0.00px;top:56.00px;width:52.00px;height:850.00px;background:#2b4197"></div>
<div class="b" style="left:52.00px;top:56.00px;width:236.00px;height:850.00px;background:#2f4daa"></div>
<div class="b" style="left:4.00px;top:80.00px;width:48.00px;height:41.00px;background:#263b87;border-radius:8px 0 0 8px"></div>
<div class="b" style="left:49.00px;top:80.00px;width:3.00px;height:41.00px;background:#d9dce6"></div>
<div class="b" style="left:0.00px;top:905.00px;width:288.00px;height:1.00px;background:#27397f"></div>
<svg class="i" style="left:19.25px;top:90.00px" width="21.50" height="21.50" viewBox="0 0 24 24" fill="#e4e7f1" ><path d="M10 20v-6h4v6h5v-8h3L12 3 2 12h3v8z"/></svg>
<svg class="i" style="left:19.25px;top:139.00px" width="21.50" height="21.50" viewBox="0 0 24 24" fill="#e4e7f1" ><path d="M17 12c-2.76 0-5 2.24-5 5s2.24 5 5 5 5-2.24 5-5-2.24-5-5-5zm1.65 7.35L16.5 17.2V14h1v2.79l1.85 1.85-.7.71zM18 3h-3.18C14.4 1.84 13.3 1 12 1s-2.4.84-2.82 2H6c-1.1 0-2 .9-2 2v15c0 1.1.9 2 2 2h6.11c-.59-.57-1.07-1.25-1.42-2H6V5h2v3h8V5h2v5.08c.71.1 1.38.31 2 .6V5c0-1.1-.9-2-2-2zm-6 2c-.55 0-1-.45-1-1s.45-1 1-1 1 .45 1 1-.45 1-1 1z"/></svg>
<svg class="i" style="left:19.25px;top:188.00px" width="21.50" height="21.50" viewBox="0 0 24 24" fill="#e4e7f1" ><path d="M12 2C6.48 2 2 6.48 2 12s4.48 10 10 10 10-4.48 10-10S17.52 2 12 2zm1.41 16.09V20h-2.67v-1.93c-1.71-.36-3.16-1.46-3.27-3.4h1.96c.1 1.05.82 1.87 2.65 1.87 1.96 0 2.4-.98 2.4-1.59 0-.83-.44-1.61-2.67-2.14-2.48-.6-4.18-1.62-4.18-3.67 0-1.72 1.39-2.84 3.11-3.21V4h2.67v1.95c1.86.45 2.79 1.86 2.85 3.39H14.3c-.05-1.11-.64-1.87-2.22-1.87-1.5 0-2.4.68-2.4 1.64 0 .84.65 1.39 2.67 1.91s4.18 1.39 4.18 3.91c-.01 1.83-1.38 2.83-3.12 3.16z"/></svg>
<svg class="i" style="left:19.25px;top:237.00px" width="21.50" height="21.50" viewBox="0 0 24 24" fill="#e4e7f1" ><path d="M11.99 2C6.47 2 2 6.48 2 12s4.47 10 9.99 10C17.52 22 22 17.52 22 12S17.52 2 11.99 2zM12 20c-4.42 0-8-3.58-8-8s3.58-8 8-8 8 3.58 8 8-3.58 8-8 8zm.5-13H11v6l5.25 3.15.75-1.23-4.5-2.67z"/></svg>
<svg class="i" style="left:19.25px;top:286.00px" width="21.50" height="21.50" viewBox="0 0 24 24" fill="#e4e7f1" ><path d="M1 11h4v11H1zM16 3.25C16.65 2.49 17.66 2 18.7 2 20.55 2 22 3.45 22 5.3c0 2.27-2.91 4.9-6 7.7-3.09-2.81-6-5.44-6-7.7C10 3.45 11.45 2 13.3 2c1.04 0 2.05.49 2.7 1.25zM20 17h-7l-2.09-.73.33-.94L13 16h2.82c.65 0 1.18-.53 1.18-1.18 0-.49-.31-.93-.77-1.11L8.970 11H7v9.020L14 22l8.010-3c-.01-1.1-.9-2-2.010-2z"/></svg>
<svg class="i" style="left:19.25px;top:335.00px" width="21.50" height="21.50" viewBox="0 0 24 24" fill="#e4e7f1" ><path d="M20 6h-2.180c.110-.310.180-.650.180-1 0-1.660-1.340-3-3-3-1.050 0-1.960.540-2.500 1.350l-.5.670-.5-.680C10.960 2.540 10.050 2 9 2 7.340 2 6 3.340 6 5c0 .350.070.690.180 1H4c-1.110 0-1.990.890-1.990 2L2 19c0 1.110.890 2 2 2h16c1.110 0 2-.890 2-2V8c0-1.110-.890-2-2-2zm-5-2c.550 0 1 .450 1 1s-.450 1-1 1-1-.450-1-1 .450-1 1-1zM9 4c.550 0 1 .450 1 1s-.450 1-1 1-1-.450-1-1 .450-1 1-1zm11 15H4v-2h16v2zm0-5H4V8h5.080L7 10.830 8.620 12 11 8.760l1-1.360 1 1.360L15.380 12 17 10.830 14.920 8H20v6z"/></svg>
<svg class="i" style="left:19.25px;top:384.00px" width="21.50" height="21.50" viewBox="0 0 24 24" fill="#e4e7f1" ><path d="M5 13.18v4L12 21l7-3.82v-4L12 17l-7-3.82zM12 3L1 9l11 6 9-4.91V17h2V9L12 3z"/></svg>
<svg class="i" style="left:19.25px;top:433.00px" width="21.50" height="21.50" viewBox="0 0 24 24" fill="#e4e7f1" ><path d="M10 4H4c-1.1 0-1.99.9-1.99 2L2 18c0 1.1.9 2 2 2h16c1.1 0 2-.9 2-2V8c0-1.1-.9-2-2-2h-8l-2-2z"/></svg>
<svg class="i" style="left:19.25px;top:482.00px" width="21.50" height="21.50" viewBox="0 0 24 24" fill="#e4e7f1" ><path d="M20 4H4v2h16V4zm1 10v-2l-1-5H4l-1 5v2h1v6h10v-6h4v6h2v-6h1zm-9 4H6v-4h6v4z"/></svg>
<svg class="i" style="left:118px;top:98px" width="104" height="46" viewBox="0 0 104 46" fill="none" stroke="#fff" stroke-width="5" stroke-linejoin="round"><circle cx="4.500" cy="22.600" r="2.650" fill="#fff" stroke="none"/><circle cx="97.400" cy="22.600" r="2.650" fill="#fff" stroke="none"/><path d="M14.400 3.600V28.450"/><circle cx="24.900" cy="28.450" r="10.500"/><path d="M46.350 15.400V30.900a7.500 7.500 0 0 0 7.500 7.500H62.250M62.250 15.400V41"/><path d="M73.550 3.900V41M75 27.400H81a7.750 7.750 0 0 1 7.750 7.750V41"/><polygon points="84.700,15.400 90.700,15.400 79.200,29.100 73.200,29.100" fill="#fff" stroke="none"/></svg>
<span class="t" style="left:72.00px;top:194px;font-size:14.30px;font-weight:700;letter-spacing:0.029px;color:#fff;">Mi Demo Plataforma</span>
<svg class="i" style="left:71.50px;top:246.70px" width="17.00" height="17.00" viewBox="0 0 24 24" fill="#fff" ><path d="M16 3H5c-1.100 0-2 .900-2 2v14c0 1.100.900 2 2 2h14c1.100 0 2-.900 2-2V8l-5-5zM7 7h5v2H7V7zm10 10H7v-2h10v2zm0-4H7v-2h10v2zm-2-4V5l4 4h-4z"/></svg>
<span class="t" style="left:100.30px;top:246px;font-size:15.00px;letter-spacing:-0.114px;color:#fff;">Portal</span>
<svg class="i" style="left:71.50px;top:294.20px" width="17.00" height="17.00" viewBox="0 0 24 24" fill="#fff" ><path d="M20 6h-2.180c.110-.310.180-.650.180-1 0-1.660-1.340-3-3-3-1.050 0-1.960.540-2.500 1.350l-.5.670-.5-.680C10.960 2.540 10.050 2 9 2 7.340 2 6 3.340 6 5c0 .350.070.690.180 1H4c-1.110 0-1.990.890-1.990 2L2 19c0 1.110.890 2 2 2h16c1.110 0 2-.890 2-2V8c0-1.110-.890-2-2-2zm-5-2c.550 0 1 .450 1 1s-.450 1-1 1-1-.450-1-1 .450-1 1-1zM9 4c.550 0 1 .450 1 1s-.450 1-1 1-1-.450-1-1 .450-1 1-1zm11 15H4v-2h16v2zm0-5H4V8h5.080L7 10.830 8.620 12 11 8.760l1-1.360 1 1.360L15.380 12 17 10.830 14.920 8H20v6z"/></svg>
<span class="t" style="left:100.30px;top:293px;font-size:15.00px;letter-spacing:0.029px;color:#fff;">Beneficios</span>
<svg class="i" style="left:71.50px;top:341.70px" width="17.00" height="17.00" viewBox="0 0 24 24" fill="#fff" ><path d="M14 2H6c-1.1 0-1.99.9-1.99 2L4 20c0 1.1.89 2 1.99 2H18c1.1 0 2-.9 2-2V8l-6-6zm2 16H8v-2h8v2zm0-4H8v-2h8v2zm-3-5V3.5L18.5 9H13z"/></svg>
<span class="t" style="left:100.30px;top:341px;font-size:15.00px;letter-spacing:-0.118px;color:#fff;">Mis Encuestas</span>
<svg class="i" style="left:71.50px;top:389.20px" width="17.00" height="17.00" viewBox="0 0 24 24" fill="#fff" ><path d="M17 10.43V2H7v8.43c0 .35.18.68.49.86l4.18 2.51-.99 2.34-3.41.29 2.59 2.24L9.07 22 12 20.23 14.93 22l-.78-3.33 2.59-2.24-3.41-.29-.99-2.34 4.18-2.51c.3-.18.48-.5.48-.86zm-4 1.8l-1 .6-1-.6V3h2v9.23z"/></svg>
<span class="t" style="left:100.30px;top:388px;font-size:15.00px;letter-spacing:-0.071px;color:#fff;">Reconocimientos</span>
<svg class="i" style="left:71.50px;top:436.70px" width="17.00" height="17.00" viewBox="0 0 24 24" fill="#fff" ><path d="M9 17l3-2.940c-.390-.040-.680-.060-1-.060-2.670 0-8 1.340-8 4v2h9l-3-3zm2-5c2.210 0 4-1.790 4-4s-1.790-4-4-4-4 1.790-4 4 1.790 4 4 4m4.470 8.500L12 17l1.400-1.410 2.070 2.080 5.130-5.170 1.400 1.410z"/></svg>
<span class="t" style="left:100.30px;top:436px;font-size:15.00px;letter-spacing:-0.053px;color:#fff;">Procesos Internos</span>
<svg class="i" style="left:71.50px;top:484.20px" width="17.00" height="17.00" viewBox="0 0 24 24" fill="#fff" ><path d="M22 11V3h-7v3H9V3H2v8h7V8h2v10h4v3h7v-8h-7v3h-2V8h2v3z"/></svg>
<span class="t" style="left:100.30px;top:483px;font-size:15.00px;letter-spacing:-0.186px;color:#fff;">Organigrama</span>
<svg class="i" style="left:71.50px;top:531.70px" width="17.00" height="17.00" viewBox="0 0 24 24" fill="#fff" ><path d="M20 0H4v2h16V0zM4 24h16v-2H4v2zM20 4H4c-1.1 0-2 .9-2 2v12c0 1.1.9 2 2 2h16c1.1 0 2-.9 2-2V6c0-1.1-.9-2-2-2zm-8 2.750c1.240 0 2.250 1.010 2.250 2.250s-1.010 2.250-2.250 2.250S9.750 10.240 9.750 9 10.760 6.750 12 6.750zM17 17H7v-1.500c0-1.670 3.330-2.500 5-2.500s5 .830 5 2.500V17z"/></svg>
<span class="t" style="left:100.30px;top:531px;font-size:15.00px;letter-spacing:0.032px;color:#fff;">Directorio</span>
<div class="b" style="left:0.00px;top:0.00px;width:1913.00px;height:56.00px;background:#f5f6f8;box-shadow:0 1px 5px rgba(0,0,0,.28)"></div>
<svg class="i" style="left:22.3px;top:20.9px" width="15.4" height="10.6" viewBox="0 0 15.4 10.6" fill="#2f4daa"><path d="M0 0h15.400v2.300H0zM0 4.150h15.400v2.300H0zM0 8.300h15.400v2.300H0z"/></svg>
<svg class="i" style="left:75.4px;top:16.3px" width="21" height="19.2" viewBox="0 0 24 24" preserveAspectRatio="none" fill="#2f4daa"><path d="M9 11H7v2h2v-2zm4 0h-2v2h2v-2zm4 0h-2v2h2v-2zm2-7h-1V2h-2v2H8V2H6v2H5c-1.11 0-1.99.9-1.99 2L3 20c0 1.1.89 2 2 2h14c1.1 0 2-.9 2-2V6c0-1.1-.9-2-2-2zm0 16H5V9h14v11z"/></svg>
<span class="t" style="left:108.00px;top:16px;font-size:15.40px;letter-spacing:-0.633px;color:#3a52b0;">Marzo 2025</span>
<div class="b" style="left:207.00px;top:9.00px;width:262.00px;height:34.00px;border:1px solid #dfe2e8;border-radius:4px;box-sizing:border-box;background:#fbfcfe"></div>
<span class="t" style="left:216.50px;top:17px;font-size:14.80px;letter-spacing:-0.046px;color:#7b808b;">Buscar (Ctrl + B)</span>
<svg class="i" style="left:439px;top:17px" width="19" height="19" viewBox="0 0 19 19" fill="none" stroke="#2f4daa" stroke-width="2.5" stroke-linecap="round"><circle cx="7.800" cy="7.800" r="5.400"/><path d="M12 12 17 17"/></svg>
<div class="b" style="left:1343.00px;top:16.00px;width:131.00px;height:22.00px;border:1.3px solid #2f4daa;border-radius:8px;box-sizing:border-box;background:#dbe2f8"></div>
<span class="t" style="left:1352.50px;top:17px;font-size:12.20px;font-weight:700;letter-spacing:-0.002px;color:#2f4daa;">Prueba Gratuita</span>
<svg class="i" style="left:1451.00px;top:20.00px" width="14.00" height="14.00" viewBox="0 0 24 24" fill="#2f4daa" ><path d="M11 7h2v2h-2zm0 4h2v6h-2zm1-9C6.48 2 2 6.48 2 12s4.48 10 10 10 10-4.48 10-10S17.52 2 12 2zm0 18c-4.41 0-8-3.59-8-8s3.59-8 8-8 8 3.59 8 8-3.59 8-8 8z"/></svg>
<div class="b" style="left:1494.00px;top:16.00px;width:20.00px;height:20.00px;border-radius:50%;background:#ff8a00"></div>
<svg class="i" style="left:1494px;top:16px" width="20" height="20" viewBox="0 0 20 20" fill="none" stroke="#fff" stroke-width="1.500" stroke-linecap="round"><circle cx="9.300" cy="10.300" r="2.500"/><path d="M11.800 10.300H15.300M5.800 5.300a7 7 0 0 0 0 10M14 5.300a7 7 0 0 1 0 10"/></svg>
<svg class="i" style="left:1538.20px;top:16.10px" width="19.70" height="19.70" viewBox="0 0 24 24" fill="#2f4daa" stroke="#2f4daa" stroke-width="0.8" stroke-linejoin="round"><path d="M10.10 4.85L10.31 2.14L13.69 2.14L13.90 4.85L15.71 5.60L17.77 3.83L20.17 6.23L18.40 8.29L19.15 10.10L21.86 10.31L21.86 13.69L19.15 13.90L18.40 15.71L20.17 17.77L17.77 20.17L15.71 18.40L13.90 19.15L13.69 21.86L10.31 21.86L10.10 19.15L8.29 18.40L6.23 20.17L3.83 17.77L5.60 15.71L4.85 13.90L2.14 13.69L2.14 10.31L4.85 10.10L5.60 8.29L3.83 6.23L6.23 3.83L8.29 5.60ZM8.40 12a3.60 3.60 0 1 0 7.20 0a3.60 3.60 0 1 0 -7.20 0Z"/></svg>
<svg class="i" style="left:1582.30px;top:16.20px" width="19.00" height="19.00" viewBox="0 0 24 24" fill="#2f4daa" ><path d="M12 22c1.1 0 2-.9 2-2h-4c0 1.1.89 2 2 2zm6-6v-5c0-3.07-1.64-5.64-4.5-6.32V4c0-.83-.67-1.5-1.5-1.5s-1.5.67-1.5 1.5v.68C7.63 5.36 6 7.92 6 11v5l-2 2v1h16v-1l-2-2z"/></svg>
<div class="b" style="left:1589.50px;top:6.00px;width:16.50px;height:22.00px;border:1px solid #c23a4a;border-radius:8.5px;box-sizing:border-box;background:#fbdcd2"></div>
<span class="t" style="left:1594.50px;top:7px;font-size:11.50px;font-weight:700;color:#c0283a;">1</span>
<svg class="i" style="left:1628.5px;top:18.8px" width="15.2" height="14.2" viewBox="0 0 15.2 14.2"><rect width="15.2" height="14.2" rx="0.6" fill="#2f4daa"/><path d="M3 3.100h9.200v1.900H3zM3 6.300h9.200v1.900H3zM3 9.500h6.200v1.900H3z" fill="#f5f6fa"/></svg>
<svg class="i" style="left:1682.00px;top:16.50px" width="20.00" height="20.00" viewBox="0 0 24 24" fill="#2f4daa" ><path d="M18 11v2h4v-2h-4zm-2 6.61c.96.71 2.21 1.65 3.2 2.39.4-.53.8-1.07 1.2-1.6-.99-.74-2.24-1.68-3.2-2.4-.4.54-.8 1.08-1.2 1.61zM20.4 5.6c-.4-.53-.8-1.07-1.2-1.6-.99.74-2.24 1.68-3.2 2.4.4.53.8 1.07 1.2 1.6.96-.72 2.21-1.65 3.2-2.4zM4 9c-1.1 0-2 .9-2 2v2c0 1.1.9 2 2 2h1v4h2v-4h1l5 3V6L8 9H4zm11.5 3c0-1.33-.58-2.53-1.5-3.35v6.69c.92-.81 1.5-2.01 1.5-3.34z"/></svg>
<svg class="i" style="left:1725.50px;top:15.50px" width="21.00" height="21.00" viewBox="0 0 24 24" fill="#2f4daa" ><path d="M11 18h2v-2h-2v2zm1-16C6.48 2 2 6.48 2 12s4.48 10 10 10 10-4.48 10-10S17.52 2 12 2zm0 18c-4.41 0-8-3.59-8-8s3.59-8 8-8 8 3.59 8 8-3.59 8-8 8zm0-14c-2.21 0-4 1.79-4 4h2c0-1.1.9-2 2-2s2 .9 2 2c0 2-3 1.75-3 5h2c0-2.25 3-2.5 3-5 0-2.21-1.79-4-4-4z"/></svg>
<svg class="i" style="left:1769px;top:6.4px;filter:drop-shadow(0 1px 1.500px rgba(0,0,0,.22))" width="40" height="40" viewBox="0 0 40 40"><defs><clipPath id="av"><circle cx="20" cy="20" r="18.600"/></clipPath></defs><circle cx="20" cy="20" r="19.600" fill="#fff"/><circle cx="20" cy="20" r="18.600" fill="#dbe3fa"/><g clip-path="url(#av)"><path d="M4.500 40V33.500C6 29.500 10 27 14.500 25.200h11C30 27 34 29.500 35.500 33.500V40z" fill="#2b7fc6"/><path d="M18 24.800h4.200l-2.100 2.600z" fill="#f4c29b"/><path d="M14.200 25.300 18 24.800 20.100 27.400 17.300 30.200z M25.900 25.300 22.200 24.800 20.100 27.400 22.900 30.200z" fill="#1f68a3"/><circle cx="20.100" cy="29.700" r=".45" fill="#c9b458"/><circle cx="20.100" cy="31.700" r=".45" fill="#c9b458"/><circle cx="20.100" cy="33.700" r=".45" fill="#c9b458"/><ellipse cx="13.100" cy="16.500" rx="1.200" ry="1.700" fill="#f1b78f"/><ellipse cx="27" cy="16.500" rx="1.200" ry="1.700" fill="#f1b78f"/><path d="M14.600 9h10.900v10.500c0 3-2.500 5-5.450 5s-5.450-2-5.450-5z" fill="#f8caa2"/><path d="M13.900 16.500c.3 1.200 1 2 2.200 2.200 1.200-.700 6.700-.700 7.900 0 1.200-.200 1.900-1 2.200-2.200.3 3-.2 5.200-1.500 6.700-1.300 1.400-2.900 1.900-4.650 1.900s-3.350-.500-4.650-1.900c-1.300-1.500-1.800-3.700-1.500-6.700z" fill="#1a2a54"/><path d="M18.800 19.300h2.600v1.300c0 .5-.6.800-1.300.8s-1.300-.3-1.300-.8z" fill="#8e9bb8"/><path d="M13.800 14.500c-.9-3.800-.6-7.300 1.800-8.600 2.300-1.200 5.700-.6 8.200-1.700.7-.3 1.300-.8 1.800-1.500-.1.900-.3 1.500-.6 2 .9-.300 1.700-.900 2.300-1.700-.1 1.100-.5 2-1.100 2.700.8 0 1.600-.300 2.300-.800-.5 1.300-1.400 2.200-2.500 2.700.5 2.200.2 4.800-.5 6.900-.3-2.100-.8-3.700-1.700-4.800-2.400.900-6.500.900-8.600-.2-.8 1.100-1.200 2.800-1.400 5z" fill="#1a2a54"/><ellipse cx="17.500" cy="15.400" rx=".55" ry=".65" fill="#3c4a3a"/><ellipse cx="22.500" cy="15.400" rx=".55" ry=".65" fill="#3c4a3a"/><path d="M16.300 13.500h2.300M21.400 13.500h2.300" stroke="#6b5a45" stroke-width=".6"/></g></svg>
<span class="t" style="left:1817.50px;top:17px;font-size:13.60px;letter-spacing:-0.045px;color:#4d65b6;">Martín Jad...</span>
<div class="b" style="left:1848.00px;top:-6.00px;width:70.00px;height:22.50px;border:1px solid #8c8c8c;border-radius:0 0 0 9px;box-sizing:border-box;background:#fff"></div>
<span class="t" style="left:1856.5px;top:0px;font-family:'Liberation Mono',monospace;font-size:11px;color:#111;line-height:12px">230.9 <span style="color:#888">ms</span></span>
</body></html>
